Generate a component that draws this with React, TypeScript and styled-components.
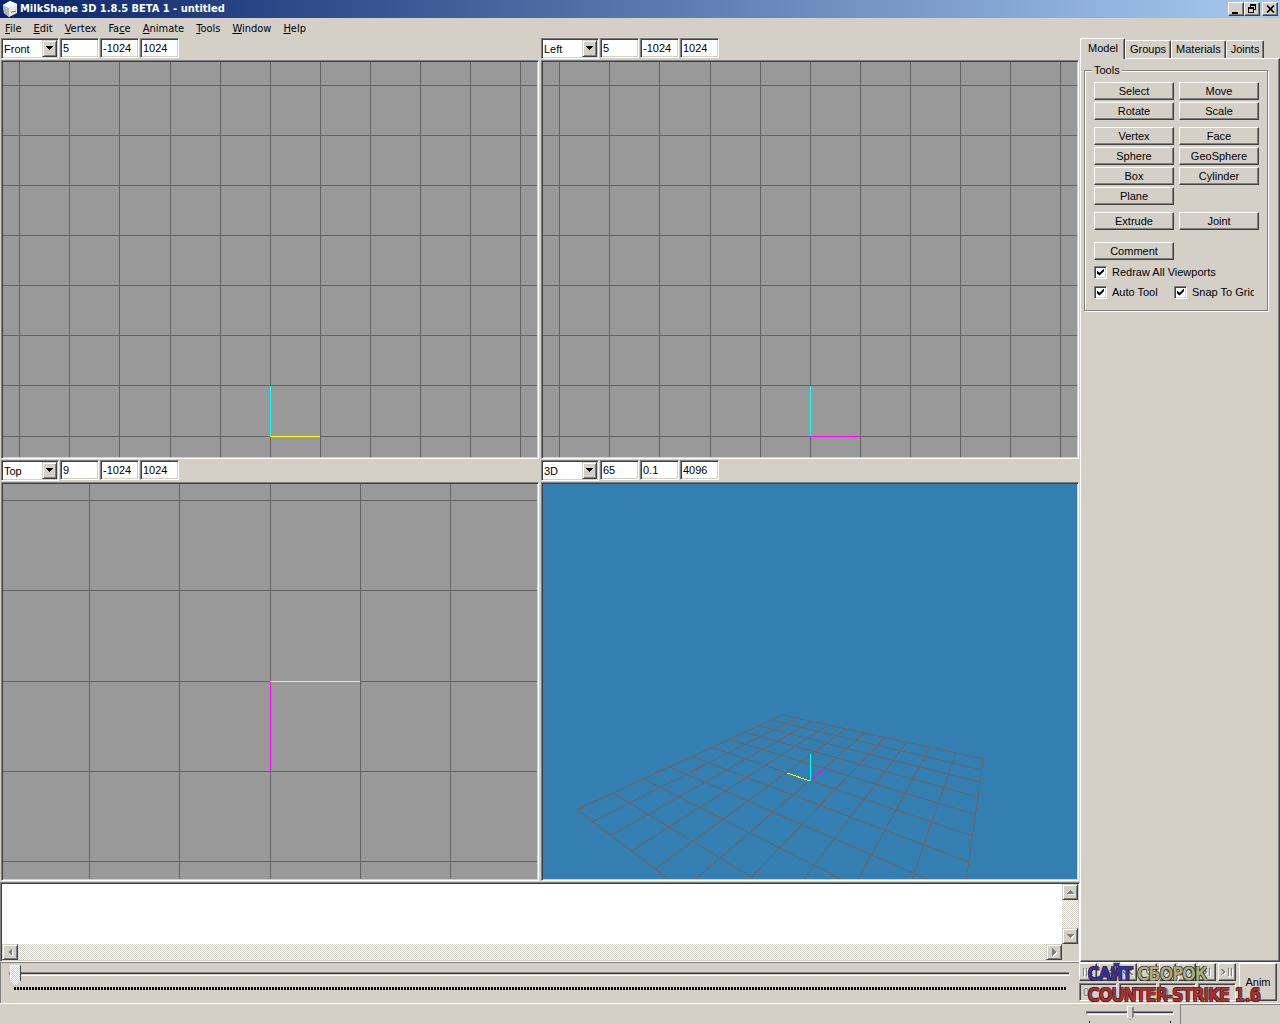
import React from "react";
import styled, { createGlobalStyle, css } from "styled-components";

const face = "#d4d0c8";
const shade = "#808080";
const dark = "#404040";
const ui = `"Liberation Sans", Arial, sans-serif`;
const tahoma = `"DejaVu Sans Condensed", "DejaVu Sans", sans-serif`;

const raised = css`
  border: 1px solid;
  border-color: #fff ${dark} ${dark} #fff;
  box-shadow: inset -1px -1px 0 ${shade};
`;
const sunken = css`
  border: 1px solid;
  border-color: ${shade} #fff #fff ${shade};
  box-shadow: inset 1px 1px 0 ${dark}, inset -1px -1px 0 ${face};
`;
const checker = css`
  background: repeating-conic-gradient(#fff 0 25%, ${face} 0 50%) 0 0 / 2px 2px;
`;

const Global = createGlobalStyle`
  *, *::before, *::after { box-sizing: border-box; }
  body { margin: 0; background: ${face}; }
  button, input, select, textarea { font: inherit; color: inherit; margin: 0; padding: 0; border-radius: 0; }
`;

const Window = styled.div`
  position: relative;
  display: flex;
  flex-direction: column;
  min-height: 100vh;
  background: ${face};
  color: #000;
  font: 11px/13px ${ui};
`;

const TitleBar = styled.header`
  display: flex;
  align-items: center;
  height: 18px;
  padding: 0 2px;
  gap: 2px;
  background: linear-gradient(90deg, #0a246a, #a6caf0);
`;
const Title = styled.h1`
  flex: 1;
  margin: 0;
  color: #fff;
  font: bold 11px/16px ${tahoma};
`;
const CaptionGroup = styled.div`
  display: flex;
`;
const CaptionButton = styled.button`
  display: grid;
  place-items: center;
  width: 16px;
  height: 14px;
  background: ${face};
  ${raised}
`;

const MenuBar = styled.nav`
  display: flex;
  align-items: center;
  height: 20px;
  padding: 2px 0 0 5px;
  gap: 12px;
`;
const MenuItem = styled.button`
  border: 0;
  background: none;
  font: 11px/16px ${tahoma};
`;

const Main = styled.main`
  flex: 1;
  display: grid;
  grid-template-columns: minmax(0, 1fr) 200px;
`;
const Workspace = styled.div`
  display: flex;
  flex-direction: column;
`;
const Viewports = styled.div`
  flex: 1;
  display: grid;
  grid-template-columns: 1fr 1fr;
  grid-auto-rows: 1fr;
  column-gap: 2px;
  padding: 0 1px;
`;
const Viewport = styled.section`
  display: flex;
  flex-direction: column;
  padding-bottom: 1px;
`;
const ViewBar = styled.div`
  display: flex;
  gap: 1px;
  height: 22px;
  padding-bottom: 1px;
`;
const Combo = styled.div`
  position: relative;
  width: 58px;
  height: 21px;
  background: #fff;
  ${sunken}
`;
const ComboSelect = styled.select`
  appearance: none;
  display: block;
  width: 100%;
  height: 100%;
  padding: 0 0 0 2px;
  border: 0;
  background: none;
  line-height: 16px;
`;
const ComboArrow = styled.span`
  position: absolute;
  top: 1px;
  right: 1px;
  display: grid;
  place-items: center;
  width: 15px;
  height: 17px;
  background: ${face};
  pointer-events: none;
  border: 1px solid;
  border-color: ${face} ${dark} ${dark} ${face};
  box-shadow: inset 1px 1px 0 #fff, inset -1px -1px 0 ${shade};
`;
const NumberBox = styled.input`
  width: 39px;
  height: 20px;
  padding: 0 2px 1px;
  background: #fff;
  ${sunken}
`;
const Canvas = styled.div<{ $color: string }>`
  flex: 1;
  display: flex;
  padding: 1px;
  background: ${(p) => p.$color};
  ${sunken}
`;
const Scene = styled.svg`
  flex: 1;
  display: block;
  width: 100%;
  min-width: 0;
  height: 0;
  min-height: 100%;
`;

const Log = styled.div`
  display: grid;
  grid-template-columns: 1fr 16px;
  grid-template-rows: 60px 16px;
  padding: 1px;
  ${sunken}
`;
const LogText = styled.textarea`
  border: 0;
  resize: none;
  outline: 0;
  overflow: hidden;
  background: #fff;
`;
const ScrollTrack = styled.div<{ $vertical?: boolean }>`
  display: flex;
  flex-direction: ${(p) => (p.$vertical ? "column" : "row")};
  justify-content: space-between;
  ${checker}
`;
const ScrollButton = styled.button`
  display: grid;
  place-items: center;
  width: 16px;
  height: 16px;
  background: ${face};
  border: 1px solid;
  border-color: ${face} ${dark} ${dark} ${face};
  box-shadow: inset 1px 1px 0 #fff, inset -1px -1px 0 ${shade};
`;

const Side = styled.aside`
  display: flex;
  flex-direction: column;
`;
const Tabs = styled.div`
  display: flex;
  align-items: flex-end;
  height: 20px;
`;
const Tab = styled.button<{ $active?: boolean }>`
  height: ${(p) => (p.$active ? 21 : 18)}px;
  margin-bottom: ${(p) => (p.$active ? -1 : 0)}px;
  padding: ${(p) => (p.$active ? "0 6px 2px 7px" : "0 4px")};
  background: ${face};
  border: 1px solid;
  border-color: #fff ${dark} transparent #fff;
  border-bottom: 0;
  border-radius: 2px 2px 0 0;
  box-shadow: inset -1px 0 0 ${shade};
  z-index: ${(p) => (p.$active ? 1 : 0)};
`;
const TabPage = styled.div`
  flex: 1;
  padding: 5px 11px 0 3px;
  ${raised}
`;
const Group = styled.fieldset`
  min-width: 0;
  margin: 0;
  padding: 5px 8px 8px 9px;
  border: 1px solid ${shade};
  box-shadow: inset 1px 1px 0 #fff, 1px 1px 0 #fff;
`;
const Legend = styled.legend`
  padding: 0 2px;
  margin-left: -2px;
  background: ${face};
`;
const ToolGrid = styled.div<{ $space: number }>`
  display: grid;
  grid-template-columns: 80px 80px;
  gap: 2px 5px;
  margin-bottom: ${(p) => p.$space}px;
`;
const ToolButton = styled.button`
  height: 18px;
  background: ${face};
  line-height: 14px;
  ${raised}
`;
const CheckRow = styled.div<{ $split?: boolean }>`
  display: grid;
  grid-template-columns: ${(p) => (p.$split ? "80px 80px" : "1fr")};
  height: 20px;
  align-items: center;
`;
const CheckLabel = styled.label`
  display: flex;
  align-items: center;
  gap: 5px;
  overflow: hidden;
  white-space: nowrap;
`;
const Check = styled.input`
  appearance: none;
  flex: none;
  display: grid;
  place-items: center;
  width: 13px;
  height: 13px;
  background: #fff;
  ${sunken}
  &:checked::after {
    content: "";
    width: 7px;
    height: 7px;
    background: #000;
    clip-path: polygon(0 28%, 36% 62%, 100% 0, 100% 40%, 36% 100%, 0 70%);
  }
`;

const Keyframer = styled.footer`
  display: grid;
  grid-template-columns: minmax(0, 1fr) 201px;
  height: 42px;
  border-bottom: 1px solid #fff;
`;
const Timeline = styled.div`
  padding: 0 9px 0 8px;
  border: 1px solid ${shade};
  border-width: 1px 0 0 1px;
`;
const Range = styled.input<{ $small?: boolean }>`
  appearance: none;
  display: block;
  width: 100%;
  height: ${(p) => (p.$small ? 14 : 21)}px;
  background: none;
  &::-webkit-slider-runnable-track {
    height: 4px;
    background: ${face};
    border: 1px solid;
    border-color: ${shade} #fff #fff ${shade};
    box-shadow: inset 0 1px 0 ${dark};
  }
  &::-webkit-slider-thumb {
    appearance: none;
    width: ${(p) => (p.$small ? 7 : 11)}px;
    height: ${(p) => (p.$small ? 14 : 21)}px;
    margin-top: ${(p) => (p.$small ? -6 : -8)}px;
    border: 1px solid;
    border-color: #fff ${dark} ${shade} #fff;
    clip-path: polygon(0 0, 100% 0, 100% 76%, 50% 100%, 0 76%);
    ${(p) => (p.$small ? css`background: ${face}; box-shadow: inset -1px 0 0 ${shade};` : checker)}
  }
`;
const Ticks = styled.div`
  height: 3px;
  margin: 3px 4px 0 5px;
  background: repeating-linear-gradient(90deg, #000 0 2px, transparent 2px 3px);
`;
const Transport = styled.div`
  display: grid;
  grid-template-columns: 157px 38px;
  column-gap: 3px;
  border-top: 1px solid #fff;
`;
const TransportRows = styled.div`
  display: grid;
  grid-template-rows: 18px 18px;
  row-gap: 2px;
`;
const TransportRow = styled.div<{ $n: number }>`
  display: grid;
  grid-template-columns: repeat(${(p) => p.$n}, 1fr);
  column-gap: 2px;
`;
const PlayButton = styled.button`
  display: grid;
  place-items: center;
  background: ${face};
  ${raised}
`;
const FrameBox = styled.input`
  min-width: 0;
  padding: 0 3px;
  background: ${face};
  color: ${shade};
  ${sunken}
`;
const AnimButton = styled.button`
  height: 38px;
  background: ${face};
  ${raised}
`;

const StatusBar = styled.div`
  display: grid;
  grid-template-columns: minmax(0, 1fr) 88px 100px;
  column-gap: 6px;
  height: 20px;
`;
const StatusSlider = styled.div`
  padding-top: 2px;
`;
const StatusTicks = styled.div`
  display: flex;
  justify-content: space-between;
  margin: 1px 3px 0;
  &::before, &::after {
    content: "";
    width: 1px;
    height: 2px;
    background: #000;
  }
`;
const StatusCell = styled.div`
  border: 1px solid ${shade};
  border-width: 1px 0 0 1px;
`;

const Watermark = styled.p`
  position: absolute;
  right: 15px;
  bottom: 19px;
  margin: 0;
  width: 177px;
  white-space: nowrap;
  pointer-events: none;
  font: 18px/21px ${tahoma};
`;
const Ink = styled.span<{ $color: string }>`
  color: ${(p) => p.$color};
  -webkit-text-stroke: 1px ${(p) => p.$color};
  text-shadow: 1px 1px 0 #222, -1px -1px 0 #222, 1px -1px 0 #222, -1px 1px 0 #222;
`;

function Arrow({ dir, color = "#000" }: { dir: "up" | "down" | "left" | "right"; color?: string }) {
  const pts = {
    up: "0,6 8,6 4,2",
    down: "0,2 8,2 4,6",
    left: "6,0 6,8 2,4",
    right: "2,0 2,8 6,4",
  }[dir];
  return (
    <svg width="9" height="9" shapeRendering="crispEdges">
      {color !== "#000" && <polygon points={pts} fill="#fff" transform="translate(1 1)" />}
      <polygon points={pts} fill={color} />
    </svg>
  );
}

/* Engraved transport glyph: a white copy one pixel down and right, grey on top. */
function Glyph({ d }: { d: string }) {
  return (
    <svg width="14" height="11" fill="none" shapeRendering="crispEdges">
      <path d={d} stroke="#fff" transform="translate(1 1)" />
      <path d={d} stroke={shade} />
    </svg>
  );
}

type Axis = { dx: number; dy: number; color: string };

function OrthoScene({ originY, step, axes }: { originY: number; step: number; axes: Axis[] }) {
  const ks = Array.from({ length: 61 }, (_, i) => i - 30);
  return (
    <Scene shapeRendering="crispEdges">
      <svg x="50%" y={originY} overflow="visible">
        <g fill="#646464">
          {ks.map((k) => (
            <React.Fragment key={k}>
              <rect x={Math.floor(k * step + 0.3)} y={-2000} width="1" height="4000" />
              <rect x={-2000} y={Math.floor(k * step + 0.1)} width="4000" height="1" />
            </React.Fragment>
          ))}
        </g>
        {axes.map((a) => (
          <rect
            key={a.color}
            x={0}
            y={Math.min(0, a.dy)}
            width={Math.abs(a.dx) || 1}
            height={Math.abs(a.dy) || 1}
            fill={a.color}
          />
        ))}
      </svg>
    </Scene>
  );
}

/* Projects a ground-plane cell corner (0..10, 0..10) on to the view. */
function project(u: number, v: number): [number, number] {
  const w = 1 - 0.0303 * u - 0.048 * v;
  return [(782 - 9.66 * u - 48.2 * v) / w - 810, (715 - 18.6 * u - 29.4 * v) / w - 484];
}

function PerspectiveScene() {
  const n = Array.from({ length: 11 }, (_, i) => i);
  const line = (a: [number, number], b: [number, number], key: string) => (
    <line key={key} x1={a[0]} y1={a[1]} x2={b[0]} y2={b[1]} />
  );
  return (
    <Scene shapeRendering="crispEdges">
      <svg x="50%" overflow="visible">
        <g stroke="#6e6464">
          {n.map((i) => line(project(i, 0), project(i, 10), "u" + i))}
          {n.map((i) => line(project(0, i), project(10, i), "v" + i))}
        </g>
        <line x1="1" y1="296" x2="14" y2="285" stroke="#f0f" strokeDasharray="3 1" />
        <line x1="0" y1="297" x2="-23" y2="289" stroke="#ff0" />
        <rect x="0" y="270" width="1" height="27" fill="#0ff" />
      </svg>
    </Scene>
  );
}

const viewNames = ["Front", "Back", "Left", "Right", "Top", "Bottom", "3D"];
const views = [
  { name: "Front", values: ["5", "-1024", "1024"], color: "#999", scene: <OrthoScene originY={374} step={50.12} axes={[{ dx: 0, dy: -50, color: "#0ff" }, { dx: 50, dy: 0, color: "#ff0" }]} /> },
  { name: "Left", values: ["5", "-1024", "1024"], color: "#999", scene: <OrthoScene originY={374} step={50.12} axes={[{ dx: 0, dy: -50, color: "#0ff" }, { dx: 50, dy: 0, color: "#f0f" }]} /> },
  { name: "Top", values: ["9", "-1024", "1024"], color: "#999", scene: <OrthoScene originY={197} step={90.32} axes={[{ dx: 0, dy: 90, color: "#f0f" }, { dx: 90, dy: 0, color: "#e2e2e2" }]} /> },
  { name: "3D", values: ["65", "0.1", "4096"], color: "#337fb2", scene: <PerspectiveScene /> },
];
const fieldNames = ["zoom", "near plane", "far plane"];

const menus: [string, string, string][] = [
  ["", "F", "ile"], ["", "E", "dit"], ["", "V", "ertex"], ["Fa", "c", "e"],
  ["", "A", "nimate"], ["", "T", "ools"], ["", "W", "indow"], ["", "H", "elp"],
];
const toolGroups = [
  { tools: ["Select", "Move", "Rotate", "Scale"], space: 7 },
  { tools: ["Vertex", "Face", "Sphere", "GeoSphere", "Box", "Cylinder", "Plane"], space: 7 },
  { tools: ["Extrude", "Joint"], space: 12 },
  { tools: ["Comment"], space: 2 },
];
const transport = [
  { name: "First key", d: "M2.5 1v8M5.5 1v8M12 2l-4 3l4 3" },
  { name: "First frame", d: "M4.5 1v8M11 2l-4 3l4 3" },
  { name: "Previous key", d: "M6 2l-4 3l4 3M12 2l-4 3l4 3" },
  { name: "Previous frame", d: "M9 2l-4 3l4 3" },
  { name: "Play", d: "M5 2l4 3l-4 3" },
  { name: "Next frame", d: "M2 2l4 3l-4 3M8 2l4 3l-4 3" },
  { name: "Last frame", d: "M3 2l4 3l-4 3M9.5 1v8" },
  { name: "Last key", d: "M1 2l4 3l-4 3M8.5 1v8M11.5 1v8" },
];

export default function App() {
  return (
    <Window>
      <Global />
      <TitleBar>
        <svg width="16" height="16" viewBox="0 0 16 16">
          <polygon points="1,4 8,0 15,3 15,12 7,16 2,12" fill="#e8e8e8" />
          <polygon points="1,4 8,0 15,3 7,7" fill="#fff" />
          <polygon points="1,4 7,7 7,16 2,12" fill="#b4b8c0" />
          <path d="M9 11.5l2-1 1 .3 2-1" stroke="#c44" fill="none" />
        </svg>
        <Title>MilkShape 3D 1.8.5 BETA 1 - untitled</Title>
        <CaptionGroup>
          <CaptionButton aria-label="Minimize">
            <svg width="10" height="9" shapeRendering="crispEdges"><rect x="1" y="7" width="6" height="2" /></svg>
          </CaptionButton>
          <CaptionButton aria-label="Restore">
            <svg width="10" height="10" shapeRendering="crispEdges">
              <path d="M3 0h6v6h-2v-1h1v-3h-4v1h-1zM1 3h6v6h-6zM2 5v3h4v-3z" fillRule="evenodd" />
            </svg>
          </CaptionButton>
        </CaptionGroup>
        <CaptionButton aria-label="Close">
          <svg width="9" height="8"><path d="M1 .5l7 7M8 .5l-7 7" stroke="#000" strokeWidth="1.6" /></svg>
        </CaptionButton>
      </TitleBar>
      <MenuBar>
        {menus.map(([a, key, b]) => (
          <MenuItem key={a + key + b}>{a}<u>{key}</u>{b}</MenuItem>
        ))}
      </MenuBar>
      <Main>
        <Workspace>
          <Viewports>
            {views.map((v) => (
              <Viewport key={v.name}>
                <ViewBar>
                  <Combo>
                    <ComboSelect defaultValue={v.name} aria-label={`${v.name} view`}>
                      {viewNames.map((n) => <option key={n}>{n}</option>)}
                    </ComboSelect>
                    <ComboArrow><Arrow dir="down" /></ComboArrow>
                  </Combo>
                  {v.values.map((value, i) => (
                    <NumberBox key={i} defaultValue={value} aria-label={`${v.name} ${fieldNames[i]}`} />
                  ))}
                </ViewBar>
                <Canvas $color={v.color}>{v.scene}</Canvas>
              </Viewport>
            ))}
          </Viewports>
          <Log>
            <LogText aria-label="Messages" readOnly />
            <ScrollTrack $vertical>
              <ScrollButton aria-label="Scroll up"><Arrow dir="up" color={shade} /></ScrollButton>
              <ScrollButton aria-label="Scroll down"><Arrow dir="down" color={shade} /></ScrollButton>
            </ScrollTrack>
            <ScrollTrack>
              <ScrollButton aria-label="Scroll left"><Arrow dir="left" color={shade} /></ScrollButton>
              <ScrollButton aria-label="Scroll right"><Arrow dir="right" color={shade} /></ScrollButton>
            </ScrollTrack>
          </Log>
        </Workspace>
        <Side>
          <Tabs role="tablist">
            {["Model", "Groups", "Materials", "Joints"].map((t, i) => (
              <Tab key={t} role="tab" aria-selected={i === 0} $active={i === 0}>{t}</Tab>
            ))}
          </Tabs>
          <TabPage role="tabpanel">
            <Group>
              <Legend>Tools</Legend>
              {toolGroups.map((g) => (
                <ToolGrid key={g.tools[0]} $space={g.space}>
                  {g.tools.map((t) => <ToolButton key={t}>{t}</ToolButton>)}
                </ToolGrid>
              ))}
              <CheckRow>
                <CheckLabel><Check type="checkbox" defaultChecked />Redraw All Viewports</CheckLabel>
              </CheckRow>
              <CheckRow $split>
                <CheckLabel><Check type="checkbox" defaultChecked />Auto Tool</CheckLabel>
                <CheckLabel><Check type="checkbox" defaultChecked />Snap To Grid</CheckLabel>
              </CheckRow>
            </Group>
          </TabPage>
        </Side>
      </Main>
      <Keyframer>
        <Timeline>
          <Range type="range" defaultValue={0} aria-label="Current frame" />
          <Ticks />
        </Timeline>
        <Transport>
          <TransportRows>
            <TransportRow $n={8}>
              {transport.map((t) => (
                <PlayButton key={t.name} disabled aria-label={t.name}><Glyph d={t.d} /></PlayButton>
              ))}
            </TransportRow>
            <TransportRow $n={4}>
              {["First", "Current", "Last", "Total"].map((t) => (
                <FrameBox key={t} disabled defaultValue="0" aria-label={`${t} frame`} />
              ))}
            </TransportRow>
          </TransportRows>
          <AnimButton>Anim</AnimButton>
        </Transport>
      </Keyframer>
      <StatusBar>
        <span />
        <StatusSlider>
          <Range type="range" $small defaultValue={50} aria-label="Playback speed" />
          <StatusTicks />
        </StatusSlider>
        <StatusCell />
      </StatusBar>
      <Watermark>
        <Ink $color="#3c30a0">САЙТ</Ink> <Ink $color="#b0b17c">СБОРОК</Ink>
        <br />
        <Ink $color="#b82c2c">COUNTER-STRIKE 1.6</Ink>
      </Watermark>
    </Window>
  );
}
